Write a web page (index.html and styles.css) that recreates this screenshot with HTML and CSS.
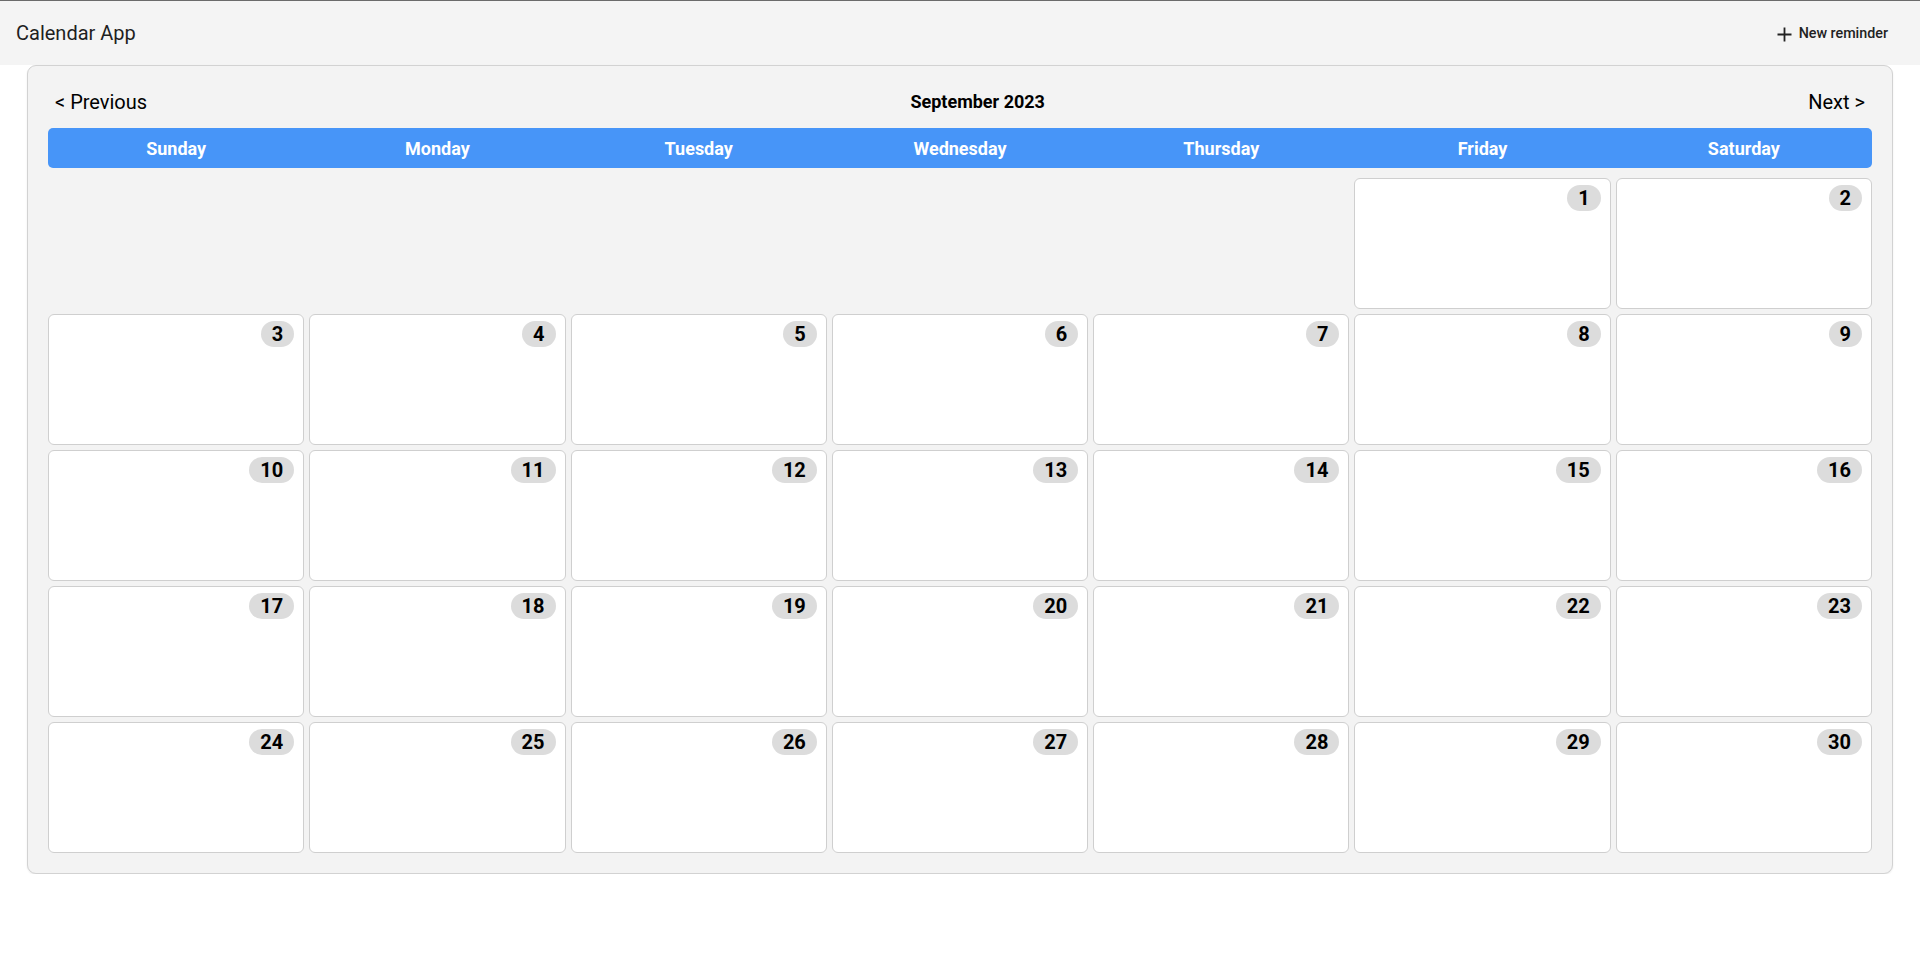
FILE: index.html
```html
<!DOCTYPE html>
<html lang="en">
<head>
<meta charset="utf-8">
<title>Calendar App</title>
<link rel="stylesheet" href="styles.css">
</head>
<body>
<header class="topbar">
  <div class="brand">Calendar App</div>
  <button class="new-btn" type="button">
    <svg class="plus" width="15" height="15" viewBox="0 0 15 15"><path d="M7.5 0.5V14.5M0.5 7.5H14.5" stroke="#222" stroke-width="1.8" fill="none"/></svg>
    <span>New reminder</span>
  </button>
</header>
<main class="card">
  <div class="nav">
    <button class="nav-btn" type="button">&lt; Previous</button>
    <div class="month">September 2023</div>
    <button class="nav-btn" type="button">Next &gt;</button>
  </div>
  <div class="weekdays">
    <div>Sunday</div><div>Monday</div><div>Tuesday</div><div>Wednesday</div><div>Thursday</div><div>Friday</div><div>Saturday</div>
  </div>
  <div class="grid">
    <div class="blank"></div><div class="blank"></div><div class="blank"></div><div class="blank"></div><div class="blank"></div>
    <div class="day"><span class="num">1</span></div>
    <div class="day"><span class="num">2</span></div>
    <div class="day"><span class="num">3</span></div>
    <div class="day"><span class="num">4</span></div>
    <div class="day"><span class="num">5</span></div>
    <div class="day"><span class="num">6</span></div>
    <div class="day"><span class="num">7</span></div>
    <div class="day"><span class="num">8</span></div>
    <div class="day"><span class="num">9</span></div>
    <div class="day"><span class="num">10</span></div>
    <div class="day"><span class="num">11</span></div>
    <div class="day"><span class="num">12</span></div>
    <div class="day"><span class="num">13</span></div>
    <div class="day"><span class="num">14</span></div>
    <div class="day"><span class="num">15</span></div>
    <div class="day"><span class="num">16</span></div>
    <div class="day"><span class="num">17</span></div>
    <div class="day"><span class="num">18</span></div>
    <div class="day"><span class="num">19</span></div>
    <div class="day"><span class="num">20</span></div>
    <div class="day"><span class="num">21</span></div>
    <div class="day"><span class="num">22</span></div>
    <div class="day"><span class="num">23</span></div>
    <div class="day"><span class="num">24</span></div>
    <div class="day"><span class="num">25</span></div>
    <div class="day"><span class="num">26</span></div>
    <div class="day"><span class="num">27</span></div>
    <div class="day"><span class="num">28</span></div>
    <div class="day"><span class="num">29</span></div>
    <div class="day"><span class="num">30</span></div>
  </div>
</main>
</body>
</html>
```
FILE: styles.css
```css
* { box-sizing: border-box; }
html, body { margin: 0; padding: 0; background: #fff; }
body { font-family: Roboto, "Liberation Sans", Arial, sans-serif; color: #000; }

.topbar {
  height: 65px;
  border-top: 1px solid #6b6b6b;
  background: #f4f4f4;
  display: flex;
  align-items: center;
  justify-content: space-between;
  padding: 0 16px;
}
.brand { font-size: 20px; color: #1f1f1f; }
.new-btn {
  display: flex;
  align-items: center;
  gap: 7px;
  background: transparent;
  border: 0;
  padding: 0 16px 0 0;
  font-family: inherit;
  font-size: 14.3px;
  font-weight: 500;
  color: #222;
  cursor: pointer;
}
.plus { margin-top: 3px; }

.card {
  margin: 0 27px;
  background: #f3f3f3;
  border: 1px solid #d2d2d2;
  border-radius: 9px;
  box-shadow: 0 1px 2px rgba(0,0,0,0.08);
  padding: 20px 20px 20px;
}
.nav {
  height: 31px;
  display: flex;
  align-items: center;
  justify-content: space-between;
  margin-bottom: 11px;
}
.nav-btn {
  background: transparent;
  border: 0;
  font-family: inherit;
  font-size: 20px;
  line-height: 24px;
  padding: 3px 7px;
  color: #000;
  cursor: pointer;
}
.month { font-size: 18px; font-weight: 700; }

.weekdays {
  display: grid;
  grid-template-columns: repeat(7, 1fr);
  gap: 5px;
  height: 40px;
  align-items: center;
  background: #4795f8;
  border-radius: 5px;
  color: #fff;
  font-weight: 700;
  font-size: 18px;
  text-align: center;
  margin-bottom: 10px;
}

.grid {
  display: grid;
  grid-template-columns: repeat(7, 1fr);
  grid-auto-rows: 131px;
  gap: 5px;
}
.day {
  background: #fff;
  border: 1px solid #cfcfcf;
  border-radius: 6px;
  padding: 6px 9px;
  display: flex;
  justify-content: flex-end;
  align-items: flex-start;
}
.num {
  background: #dcdcdc;
  border-radius: 13px;
  font-weight: 700;
  font-size: 20px;
  line-height: 26px;
  height: 26px;
  padding: 0 11px;
}
```
